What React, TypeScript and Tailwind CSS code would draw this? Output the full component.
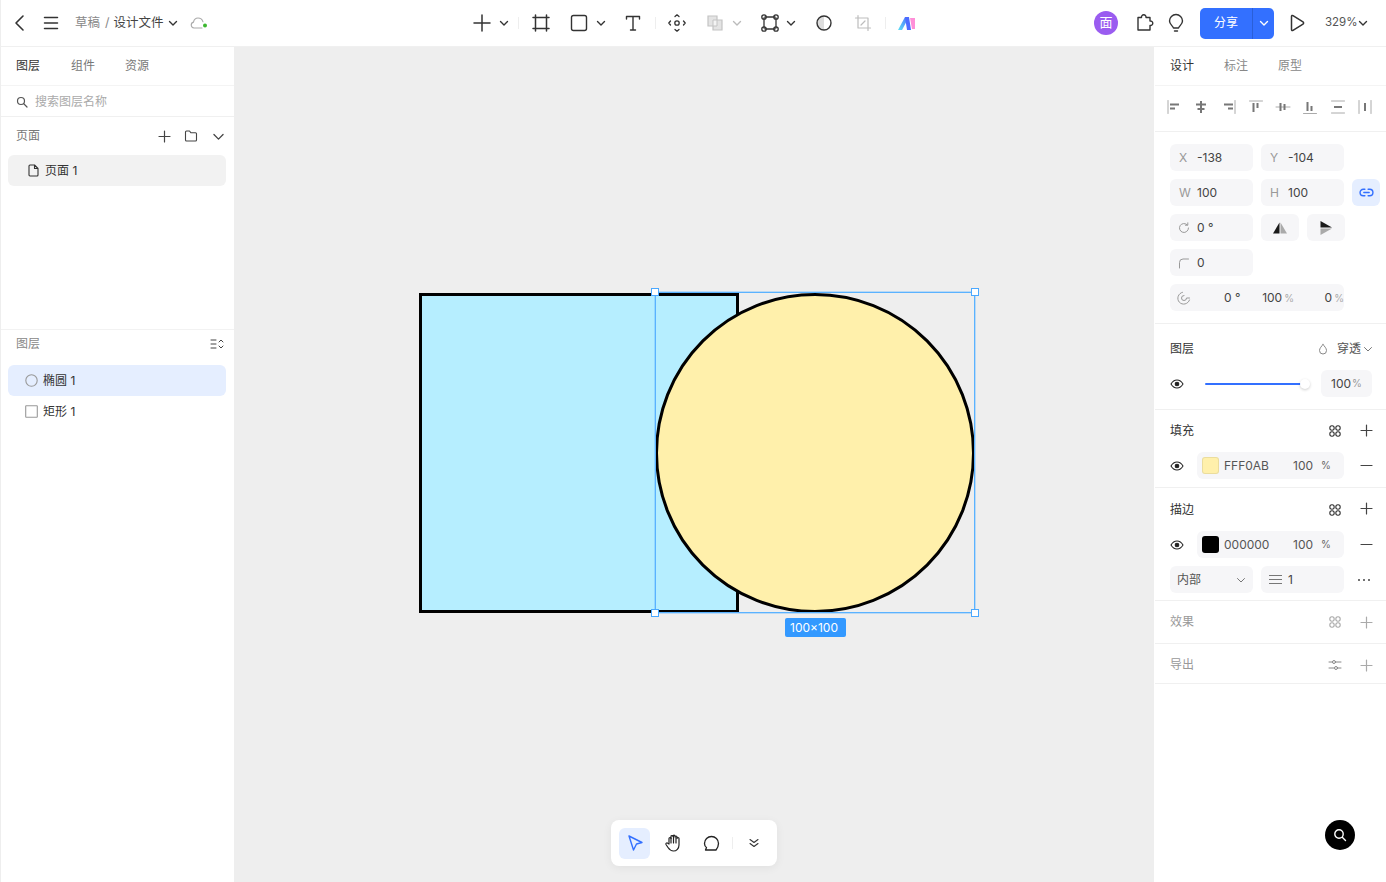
import React from "react";

const S = ({ w = 20, h = 20, vb = "0 0 20 20", c = "#333", sw = 1.5, children, className = "" }: any) => (
  <svg width={w} height={h} viewBox={vb} fill="none" stroke={c} strokeWidth={sw} strokeLinecap="round" strokeLinejoin="round" className={"shrink-0 " + className}>{children}</svg>
);
const Chev = ({ c = "#333", w = 10, sw = 1.4, className = "" }: any) => (
  <S w={w} h={w} vb="0 0 10 10" c={c} sw={sw} className={className}><path d="M1.500 3.500 5 7l3.500-3.500" /></S>
);
const Plus = ({ c = "#444", s = 13, sw = 1.2 }: any) => (
  <S w={s} h={s} vb="0 0 13 13" c={c} sw={sw}><path d="M6.500 1v11M1 6.500h11" /></S>
);
const Minus = () => <S w={13} h={13} vb="0 0 13 13" c="#444" sw={1.2}><path d="M1 6.500h11" /></S>;
const Eye = () => (
  <S w={14} h={14} vb="0 0 14 14" c="#222" sw={1.1}><path d="M1 7c1.500-2.600 3.600-4 6-4s4.500 1.400 6 4c-1.500 2.600-3.600 4-6 4S2.500 9.600 1 7Z" /><circle cx="7" cy="7" r="1.800" fill="#222" /></S>
);
const Style = ({ c = "#333" }: any) => (
  <S w={14} h={14} vb="0 0 14 14" c={c} sw={1.1}><rect x="1.800" y="1.800" width="4.400" height="4.400" rx="2.100" /><rect x="7.800" y="1.800" width="4.400" height="4.400" rx="2.100" /><rect x="1.800" y="7.800" width="4.400" height="4.400" rx="2.100" /><rect x="7.800" y="7.800" width="4.400" height="4.400" rx="2.100" /></S>
);
const Box = ({ className = "", bg = "bg-[#f6f6f8]", children }: any) => (
  <div className={"h-[27px] rounded-[6px] flex items-center shrink-0 " + bg + " " + className}>{children}</div>
);
const Field = ({ l, v }: any) => (
  <Box className="w-[83px]">
    <span className="w-[27px] pl-[9px] text-[#999] text-[12px]">{l}</span>
    <span className="text-[#444] text-[12px]">{v}</span>
  </Box>
);
const Hr = () => <div className="h-px bg-[#f0f0f0] shrink-0" />;
const AlignIcon = ({ d, line }: any) => (
  <S w={18} h={18} vb="0 0 18 18" c="#777" sw={1}><path d={line} stroke="#aaa" /><path d={d} strokeWidth={2} strokeLinecap="butt" /></S>
);

function TopBar() {
  return (
    <div className="h-[47px] shrink-0 flex items-center bg-white border-l border-[#eeeeee] border-b border-b-[#f0f0f0]">
      <div className="w-[470px] shrink-0 flex items-center pl-[10px]">
        <S w={16} h={18} vb="0 0 16 18" c="#333" sw={1.6}><path d="M12 2 5 9l7 7" /></S>
        <S w={18} h={18} vb="0 0 18 18" c="#333" sw={1.500} className="ml-[15px]"><path d="M2.500 3.500h13M2.500 9h13M2.500 14.500h13" /></S>
        <span className="ml-[15px] text-[12.5px] text-[#888]">草稿</span>
        <span className="ml-[5px] text-[12.5px] text-[#888]">/</span>
        <span className="ml-[4px] text-[12.5px] text-[#444]">设计文件</span>
        <Chev w={10} className="ml-[4px]" />
        <svg width="20" height="14" viewBox="0 0 20 14" fill="none" className="ml-[12px]"><path d="M5 12H4a3 3 0 0 1-.5-5.900C4 3.500 6 2 8 2c2.500 0 4.300 1.600 5 3.800M5 12h7" stroke="#aaa" strokeWidth="1.100" strokeLinecap="round" /><circle cx="15" cy="9.500" r="2" fill="#3cb72f" /></svg>
      </div>
      <div className="flex items-center">
        <S w={22} h={22} vb="0 0 22 22" c="#333" sw={1.500}><path d="M11 3v16M3 11h16" /></S>
        <Chev className="ml-[6px]" />
        <div className="ml-[9px] w-px h-[12px] bg-[#eee]" />
        <S w={20} h={20} c="#333" sw={1.500} className="ml-[12px]"><path d="M4.500 2v16M15.500 2v16M2 4.500h16M2 15.500h16" /></S>
        <S w={20} h={20} c="#333" sw={1.400} className="ml-[18px]"><rect x="2.500" y="2.500" width="15" height="15" rx="2" /></S>
        <Chev className="ml-[7px]" />
        <S w={20} h={20} c="#333" sw={1.400} className="ml-[17px]"><path d="M3.500 6V3.500h13V6M10 3.500V17M7.500 17h5" /></S>
        <div className="ml-[12px] w-px h-[12px] bg-[#eee]" />
        <S w={20} h={20} c="#333" sw={1.300} className="ml-[11px]"><circle cx="10" cy="10" r="2.200" /><path d="M8 3.500 10 1.800l2 1.700M8 16.500l2 1.700 2-1.700M3.500 8 1.800 10l1.700 2M16.500 8l1.700 2-1.700 2" /></S>
        <svg width="18" height="18" viewBox="0 0 18 18" fill="none" className="ml-[19px]"><path d="M2 2h9v4h5v10H7v-4H2Z" fill="#e4e4e4" stroke="#c4c4c4" strokeWidth="1.200" /><path d="M7 6h4v6H7Z" fill="#f4f4f4" stroke="#c4c4c4" strokeWidth="1" /></svg>
        <Chev c="#bbb" className="ml-[8px]" />
        <S w={20} h={20} c="#333" sw={1.300} className="ml-[18px]"><path d="M5 4h10M5 16h10M4 5v10M16 5v10" /><circle cx="4" cy="4" r="2.200" /><circle cx="16" cy="4" r="2.200" /><circle cx="4" cy="16" r="2.200" /><circle cx="16" cy="16" r="2.200" /></S>
        <Chev className="ml-[6px]" />
        <svg width="18" height="18" viewBox="0 0 18 18" fill="none" className="ml-[19px]"><path d="M9 2a7 7 0 0 0 0 14Z" fill="#ddd" /><circle cx="9" cy="9" r="7" stroke="#333" strokeWidth="1.400" /></svg>
        <S w={18} h={18} vb="0 0 18 18" c="#bdbdbd" sw={1.200} className="ml-[21px]"><path d="M4 1.500V14h12.500M1.500 4H14v12.500M7 11l4-4" /></S>
        <div className="ml-[13px] w-px h-[12px] bg-[#eee]" />
        <svg width="20" height="16" viewBox="0 0 20 16" className="ml-[11px]"><defs><linearGradient id="ai" x1="0" y1="1" x2="1" y2="0"><stop offset="0" stopColor="#5de0f5" /><stop offset="1" stopColor="#4d6bff" /></linearGradient></defs><path d="M1 15 8 2h4L5 15Z" fill="url(#ai)" /><path d="M8 2h4l2 13h-4Z" fill="#4d6bff" /><path d="M13 3h5v11h-3Z" fill="#ff8fd8" /></svg>
      </div>
      <div className="ml-auto flex items-center pr-[18px]">
        <div className="w-6 h-6 rounded-full bg-[#9a5cf0] flex items-center justify-center text-white text-[13px]">面</div>
        <S w={20} h={20} c="#333" sw={1.400} className="ml-[17px]"><path d="M3 5.500h3.500a2.300 2.300 0 1 1 4.500 0H15v3.500a2.300 2.300 0 1 1 0 4.500V18H3Z" transform="translate(0 -1)" /></S>
        <S w={18} h={20} vb="0 0 18 20" c="#333" sw={1.400} className="ml-[12px]"><path d="M6.500 15C5.800 12.800 2.500 11.500 2.500 8a6.500 6.500 0 1 1 13 0c0 3.500-3.300 4.800-4 7ZM7.500 18h3" /></S>
        <div className="ml-[15px] w-[74px] h-[31px] rounded-[5px] bg-[#3370ff] flex text-white">
          <div className="w-[53px] flex items-center justify-center text-[12px] border-r border-[#2a5fd8]">分享</div>
          <div className="flex-1 flex items-center justify-center"><Chev c="#fff" w={10} /></div>
        </div>
        <S w={20} h={20} c="#333" sw={1.500} className="ml-[13px]"><path d="M4.500 3.500c0-1 .8-1.300 1.500-.9l10 6.300c.8.500.8 1.700 0 2.200l-10 6.300c-.7.400-1.500.1-1.500-.9Z" /></S>
        <span className="ml-[18px] w-[31px] whitespace-nowrap text-[11.5px] text-[#555]">329%</span>
        <Chev className="ml-[2px]" />
      </div>
    </div>
  );
}

function LeftPanel() {
  return (
    <div className="w-[234px] shrink-0 bg-white border-l border-[#eeeeee] flex flex-col text-[12px]">
      <div className="h-[39px] flex items-center pl-[15px] border-b border-[#f4f4f4] shrink-0">
        <span className="text-[#333]">图层</span>
        <span className="ml-[31px] text-[#777]">组件</span>
        <span className="ml-[30px] text-[#777]">资源</span>
      </div>
      <div className="h-[31px] pt-[1px] flex items-center pl-[15px] border-b border-[#f0f0f0] shrink-0">
        <S w={12} h={12} vb="0 0 12 12" c="#555" sw={1.200}><circle cx="5" cy="5" r="3.500" /><path d="m8 8 3 3" /></S>
        <span className="ml-[7px] text-[#aaa]">搜索图层名称</span>
      </div>
      <div className="h-[38px] flex items-center pl-[15px] shrink-0">
        <span className="text-[#777]">页面</span>
        <div className="ml-auto flex items-center pr-[9px]">
          <Plus />
          <S w={14} h={14} vb="0 0 14 14" c="#444" sw={1.100} className="ml-[13px]"><path d="M1.500 3a1 1 0 0 1 1-1h3l1.500 1.800h4.500a1 1 0 0 1 1 1V11a1 1 0 0 1-1 1h-9a1 1 0 0 1-1-1Z" /></S>
          <Chev c="#444" w={13} sw={1.000} className="ml-[14px]" />
        </div>
      </div>
      <div className="ml-[7px] mr-[8px] h-[31px] rounded-[6px] bg-[#f2f2f2] flex items-center pl-[20px] shrink-0">
        <S w={11} h={13} vb="0 0 11 13" c="#333" sw={1.100}><path d="M1 2a1 1 0 0 1 1-1h4.500L10 4.500V11a1 1 0 0 1-1 1H2a1 1 0 0 1-1-1ZM6.500 1v3.500H10" /></S>
        <span className="ml-[6px] text-[#333]">页面 1</span>
      </div>
      <div className="h-[143px] shrink-0" />
      <div className="h-px bg-[#f2f2f2] shrink-0" />
      <div className="h-[35px] pb-[8px] flex items-center pl-[15px] pr-[10px] justify-between shrink-0">
        <span className="text-[#888]">图层</span>
        <S w={14} h={14} vb="0 0 14 14" c="#444" sw={1}><path d="M1 3h5M1 7h5M1 11h5M9 5l2-2 2 2M9 9l2 2 2-2" /></S>
      </div>
      <div className="ml-[7px] mr-[8px] h-[31px] rounded-[6px] bg-[#e5eeff] flex items-center pl-[17px] shrink-0">
        <S w={13} h={13} vb="0 0 13 13" c="#999" sw={1.100}><circle cx="6.500" cy="6.500" r="5.700" /></S>
        <span className="ml-[5px] text-[#333]">椭圆 1</span>
      </div>
      <div className="ml-[7px] mr-[8px] h-[31px] flex items-center pl-[17px] shrink-0">
        <S w={13} h={13} vb="0 0 13 13" c="#999" sw={1.100}><rect x=".7" y=".7" width="11.600" height="11.600" rx=".5" /></S>
        <span className="ml-[5px] text-[#333]">矩形 1</span>
      </div>
    </div>
  );
}

function Section({ title, muted, icons, className = "" }: any) {
  return (
    <div className={"flex items-center justify-between pl-[15px] pr-[13px] shrink-0 " + className}>
      <span className={muted ? "text-[#999]" : "text-[#333]"}>{title}</span>
      {icons}
    </div>
  );
}

function RightPanel() {
  const icons = (c?: string) => (
    <div className="flex items-center gap-[18px]">
      <Style c={c} />
      <span className={c ? "flex" : "flex -translate-y-px"}><Plus c={c || "#444"} /></span>
    </div>
  );
  return (
    <div className="w-[232px] shrink-0 bg-white border-l border-white flex flex-col text-[12px]">
      <div className="h-[39px] flex items-center pl-[15px] border-b border-[#f4f4f4] shrink-0">
        <span className="text-[#333]">设计</span>
        <span className="ml-[30px] text-[#888]">标注</span>
        <span className="ml-[30px] text-[#888]">原型</span>
      </div>
      <div className="h-[45px] flex items-start pt-[12px] pl-[10px] gap-[9.25px] shrink-0">
        <AlignIcon line="M3 2.500v13" d="M5 6.500h9M5 10.500h5" />
        <AlignIcon line="" d="M4 6.500h10M5.500 11h7M9 3v12" />
        <AlignIcon line="M15 2.500v13" d="M4 6.500h9M8 10.500h5" />
        <AlignIcon line="M2.500 3h13" d="M6.500 5v9M10.500 5v5" />
        <AlignIcon line="M2 9h14" d="M6.500 5v8M10.500 6v6" />
        <AlignIcon line="M2.500 15.500h13" d="M6.500 4v9M10.500 8v5" />
        <AlignIcon line="M2.500 3h13M2.500 15h13" d="M5 9h8" />
        <AlignIcon line="M3 2.500v13M15 2.500v13" d="M9 5v8" />
      </div>
      <Hr />
      <div className="flex flex-col gap-[8px] pt-[12px] pl-[15px] shrink-0">
        <div className="flex gap-[8px]"><Field l="X" v="-138" /><Field l="Y" v="-104" /></div>
        <div className="flex gap-[8px]">
          <Field l="W" v="100" /><Field l="H" v="100" />
          <Box bg="bg-[#e5eeff]" className="w-[28px] justify-center">
            <S w={15} h={15} vb="0 0 14 14" c="#3370ff" sw={1.300}><path d="M5.500 4H4a3 3 0 0 0 0 6h1.500M8.500 4H10a3 3 0 0 1 0 6H8.500M4.500 7h5" /></S>
          </Box>
        </div>
        <div className="flex gap-[8px]">
          <Box className="w-[83px]">
            <S w={12} h={12} vb="0 0 12 12" c="#999" sw={1} className="ml-[8px]"><path d="M10.500 6a4.500 4.500 0 1 1-1.300-3.200M9.800 .8v2.400H7.400" /></S>
            <span className="ml-[7px] text-[#444]">0 °</span>
          </Box>
          <Box className="w-[38px] justify-center">
            <svg width="14" height="14" viewBox="0 0 14 14"><path d="M6.500 1.500v11H0Z" fill="#1a1a1a" /><path d="M7.500 1.500v11H14Z" fill="#aaa" /></svg>
          </Box>
          <Box className="w-[38px] justify-center">
            <svg width="14" height="14" viewBox="0 0 14 14"><path d="M1.500 0v6.500H13Z" fill="#1a1a1a" /><path d="M1.500 7.500V14L13 7.500Z" fill="#aaa" /></svg>
          </Box>
        </div>
        <Box className="w-[83px]">
          <S w={12} h={12} vb="0 0 12 12" c="#999" sw={1} className="ml-[8px]"><path d="M1.500 11V5.500a3.500 3.500 0 0 1 3.500-3.500h5.500" /></S>
          <span className="ml-[7px] text-[#444]">0</span>
        </Box>
        <Box className="w-[174px]">
          <S w={14} h={14} vb="0 0 14 14" c="#999" sw={1} className="ml-[7px]"><path d="M12.500 9A6 6 0 1 1 5.500 1.300M7 4.500A2.500 2.500 0 1 0 9.500 7h3" /></S>
          <span className="ml-[33px] w-[24px] text-[#444]">0 °</span>
          <span className="ml-[15px] w-[42px] text-[#444]">100<span className="text-[#aaa] text-[10px] ml-[2px]">%</span></span>
          <span className="ml-[22px] text-[#444] whitespace-nowrap">0<span className="text-[#aaa] text-[10px] ml-[2px]">%</span></span>
        </Box>
      </div>
      <div className="h-[12px] shrink-0" />
      <Hr />
      <Section title="图层" className="h-[46px] pt-[4px] pr-[21px]" icons={
        <div className="flex items-center text-[#555]">
          <S w={10} h={12} vb="0 0 10 12" c="#888" sw={1}><path d="M5 1.500C3.700 3.200 1.500 5.200 1.500 7.500a3.500 3.500 0 0 0 7 0C8.500 5.200 6.300 3.200 5 1.500Z" /></S>
          <span className="ml-[9px]">穿透</span>
          <Chev c="#777" w={10} sw={1} className="ml-[2px] -mr-[8px]" />
        </div>
      } />
      <div className="flex items-center h-[27px] pl-[15px] shrink-0">
        <Eye />
        <div className="ml-[21px] relative w-[97px] h-[2px] bg-[#3370ff] rounded">
          <div className="absolute -right-[8px] -top-[4px] w-[10px] h-[10px] rounded-full bg-white shadow-[0_1px_3px_rgba(0,0,0,0.2)]" />
        </div>
        <Box className="ml-[19px] w-[51px] justify-center text-[#444]">100<span className="text-[#999] text-[10px] ml-[1px]">%</span></Box>
      </div>
      <div className="h-[12px] shrink-0" />
      <Hr />
      <Section title="填充" className="h-[42px]" icons={icons()} />
      <ColorRow swatch="bg-[#fff0ab]" hex="FFF0AB" />
      <div className="h-[8px] shrink-0" />
      <Hr />
      <Section title="描边" className="h-[43px]" icons={icons()} />
      <ColorRow swatch="bg-black" hex="000000" />
      <div className="flex items-center gap-[8px] pl-[15px] mt-[8px] shrink-0">
        <Box className="w-[83px] pl-[7px] justify-between pr-[7px] text-[#555]">内部<Chev c="#777" w={10} sw={1} /></Box>
        <Box className="w-[83px] pl-[8px] text-[#444]">
          <S w={13} h={13} vb="0 0 13 13" c="#777" sw={1.200}><path d="M.5 2.500h12M.5 6.500h12M.5 10.500h12" /></S>
          <span className="ml-[6px]">1</span>
        </Box>
        <span className="ml-[6px] flex gap-[3px]">
          <i className="w-[2px] h-[2px] rounded-full bg-[#444]" /><i className="w-[2px] h-[2px] rounded-full bg-[#444]" /><i className="w-[2px] h-[2px] rounded-full bg-[#444]" />
        </span>
      </div>
      <div className="h-[7px] shrink-0" />
      <Hr />
      <Section title="效果" muted className="h-[42px]" icons={icons("#aaa")} />
      <Hr />
      <Section title="导出" muted className="h-[39px] pt-[3px]" icons={
        <div className="flex items-center gap-[18px]">
          <S w={14} h={14} vb="0 0 14 14" c="#888" sw={1}><path d="M1 4h3.500M8 4h5M1 10h5M9.500 10H13" /><circle cx="6" cy="4" r="1.500" /><circle cx="8" cy="10" r="1.500" /></S>
          <Plus c="#aaa" />
        </div>
      } />
      <Hr />
    </div>
  );
}

function ColorRow({ swatch, hex }: any) {
  return (
    <div className="flex items-center h-[27px] pl-[15px] pr-[13px] shrink-0">
      <Eye />
      <Box className="ml-[13px] w-[147px] text-[#555]">
        <span className={"ml-[5px] w-[17px] h-[17px] rounded-[3px] border border-[#00000014] " + swatch} />
        <span className="ml-[5px] w-[69px]">{hex}</span>
        <span className="w-[28px]">100</span>
        <span className="text-[10px] text-[#666]">%</span>
      </Box>
      <span className="ml-auto"><Minus /></span>
    </div>
  );
}

const Handle = ({ className }: any) => (
  <div className={"absolute w-[8px] h-[8px] bg-white border border-[#4aa8ff] " + className} />
);

function Canvas() {
  return (
    <div className="relative flex-1 bg-[#eeeeee] overflow-hidden">
      <div className="absolute left-[185px] top-[245.500px] w-[320px] h-[320px] bg-[#b6eeff] border-[3px] border-black" />
      <div className="absolute left-[421px] top-[245.500px] w-[320px] h-[320px] rounded-full bg-[#fff0ab] border-[3px] border-black" />
      <div className="absolute left-[421px] top-[245px] w-[320px] h-[321px] border border-[#5ab2ff] shadow-[0_0_0_1px_rgba(90,178,255,0.35)]">
        <Handle className="-left-[5px] -top-[5px]" />
        <Handle className="-right-[5px] -top-[5px]" />
        <Handle className="-left-[5px] -bottom-[5px]" />
        <Handle className="-right-[5px] -bottom-[5px]" />
      </div>
      <div className="absolute left-[551px] top-[571px] w-[61px] h-[19px] pr-[3px] rounded-[2px] bg-[#3399ff] text-white text-[12px] flex items-center justify-center">100×100</div>
      <div className="absolute left-[377px] top-[773px] w-[166px] h-[46px] rounded-[8px] bg-white shadow-[0_2px_10px_rgba(0,0,0,0.06)] flex items-center pl-[8px]">
        <div className="w-[31px] h-[31px] rounded-[6px] bg-[#e5eeff] flex items-center justify-center">
          <S w={18} h={18} vb="0 0 18 18" c="#3370ff" sw={1.400}><path d="M3 2l13 6.500-5.500 1.500L7.500 16Z" /></S>
        </div>
        <S w={20} h={20} c="#222" sw={1.200} className="ml-[13px]"><path d="M6 11V5.500a1 1 0 0 1 2 0V3.500a1 1 0 0 1 2 0v-.3a1 1 0 0 1 2 0V4a1 1 0 0 1 2 0v1.500a1 1 0 0 1 2 0V12c0 3.500-2.500 6-5.500 6-2.800 0-3.800-1-5.500-3.500L3 11.500c-.6-1 .8-2.200 1.700-1.300Z" /><path d="M8 5v5M10.500 3v7M13 4v6" /></S>
        <S w={19} h={19} vb="0 0 19 19" c="#222" sw={1.300} className="ml-[19px]"><path d="M9.500 2.500a7 7 0 0 1 7 7c0 2.500-1 4.500-2.500 6.500H3.500l1-2.500c-1.500-1-2-2.500-2-4a7 7 0 0 1 7-7Z" /></S>
        <div className="ml-[11px] w-px h-[12px] bg-[#eee]" />
        <S w={12} h={12} vb="0 0 12 12" c="#333" sw={1.100} className="ml-[15px]"><path d="M2 2.500 6 5.500l4-3M2 6.500l4 3 4-3" /></S>
      </div>
    </div>
  );
}

export default function App() {
  return (
    <div className="relative w-[1386px] h-[882px] overflow-hidden bg-white flex flex-col" style={{ fontFamily: 'Inter, "Noto Sans CJK SC", sans-serif' }}>
      <TopBar />
      <div className="flex flex-1 min-h-0">
        <LeftPanel />
        <Canvas />
        <RightPanel />
      </div>
      <div className="absolute left-[1325px] top-[820px] w-[30px] h-[30px] rounded-full bg-black flex items-center justify-center">
        <S w={14} h={14} vb="0 0 14 14" c="#fff" sw={1.400}><circle cx="6" cy="6" r="4.200" /><path d="m9.500 9.500 3 3" /></S>
      </div>
    </div>
  );
}
